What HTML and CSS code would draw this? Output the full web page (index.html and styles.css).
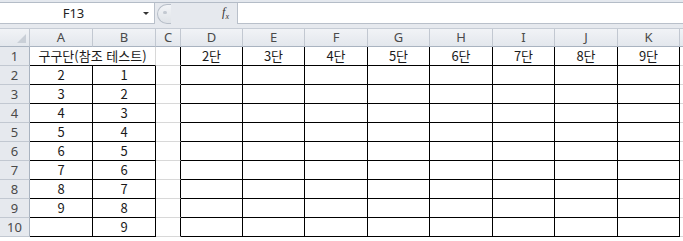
FILE: index.html
```html
<!DOCTYPE html>
<html lang="ko">
<head>
  <meta charset="UTF-8">
  <title>구구단 시트</title>
  <link rel="stylesheet" href="styles.css">
</head>
<body>
  <div class="ribbon-edge"></div>
  <div class="formula-bar">
    <div class="name-box">
      <span class="cell-name">F13</span>
      <span class="drop-arrow"></span>
    </div>
    <div class="fx-area">
      <span class="grip"></span>
      <span class="fx">f<sub>x</sub></span>
    </div>
    <div class="formula-input"></div>
  </div>

  <div class="sheet" id="sheet"></div>

  <script>
    const cols = ["A", "B", "C", "D", "E", "F", "G", "H", "I", "J", "K"];
    const sheet = document.getElementById("sheet");

    function addCell(text, classes) {
      const cell = document.createElement("div");
      cell.className = "cell " + classes;
      cell.textContent = text;
      sheet.appendChild(cell);
      return cell;
    }

    // column headers
    addCell("", "corner");
    cols.forEach(c => addCell(c, "col-head"));
    addCell("", "col-head rest");

    for (let r = 1; r <= 10; r++) {
      addCell(r, "row-head");

      if (r === 1) {
        addCell("구구단(참조 테스트)", "merged");
      } else {
        addCell(r <= 9 ? r : "", "boxed");
        addCell(r - 1, "boxed");
      }

      addCell("", "gap-col");

      for (let d = 2; d <= 9; d++) {
        addCell(r === 1 ? d + "단" : "", "boxed");
      }
      addCell("", "rest");
    }
  </script>
</body>
</html>
```

FILE: styles.css
```css
* {
  box-sizing: border-box;
}

body {
  margin: 0;
  width: 683px;
  height: 241px;
  overflow: hidden;
  background: #ffffff;
  font-family: "Noto Sans CJK KR", "Noto Sans", sans-serif;
  font-size: 13px;
  color: #1a1a1a;
}

.ribbon-edge {
  height: 3px;
  background: #e4e8ee;
  border-bottom: 1px solid #b4bcc7;
}

.formula-bar {
  display: flex;
  height: 26px;
  background: #e6e9ee;
  padding-bottom: 4px;
  border-bottom: 1px solid #c6ccd5;
}

.name-box {
  width: 155px;
  display: flex;
  align-items: center;
  background: #ffffff;
  border-right: 1px solid #b9c0ca;
  border-bottom: 1px solid #b9c0ca;
}

.cell-name {
  flex: 1;
  text-align: center;
  font-family: "Noto Sans", sans-serif;
  font-size: 13px;
  color: #222;
  padding-left: 4px;
}

.drop-arrow {
  width: 0;
  height: 0;
  margin-right: 5px;
  border-left: 3px solid transparent;
  border-right: 3px solid transparent;
  border-top: 3px solid #333;
}

.fx-area {
  width: 82px;
  display: flex;
  align-items: center;
  justify-content: space-between;
  padding: 0 8px 0 2px;
}

.grip {
  width: 14px;
  height: 20px;
  border: 1px solid #b7bec8;
  border-right: none;
  border-radius: 10px 0 0 10px;
  background: linear-gradient(#f2f4f7, #dfe3e8);
  position: relative;
}

.grip::after {
  content: "";
  position: absolute;
  left: 5px;
  top: 6px;
  width: 4px;
  height: 3px;
  border-radius: 2px;
  background: #c3c9d1;
}

.fx {
  font-family: "Liberation Serif", serif;
  font-style: italic;
  font-size: 12px;
  color: #333;
}

.fx sub {
  font-size: 8px;
}

.formula-input {
  flex: 1;
  background: #ffffff;
  border-left: 1px solid #b9c0ca;
  border-bottom: 1px solid #b9c0ca;
}

.sheet {
  display: grid;
  grid-template-columns: 30px 63px 63px 25px 62px 62px 63px 62px 63px 62px 63px 62px 1fr;
  grid-template-rows: 18px repeat(10, 19px);
}

.cell {
  border-right: 1px solid #d8d8d8;
  border-bottom: 1px solid #d8d8d8;
  text-align: center;
  line-height: 18px;
  white-space: nowrap;
  overflow: hidden;
}

.corner,
.col-head,
.row-head {
  background: linear-gradient(#f1f3f6, #e3e7ed);
  color: #4a4a4a;
  border-right-color: #c2c8d1;
  border-bottom-color: #a9b3c0;
}

.col-head {
  line-height: 17px;
  font-family: "Noto Sans", sans-serif;
}

.row-head {
  background: #e6e9ee;
  border-bottom-color: #c2c8d1;
  border-right-color: #a9b3c0;
  font-family: "Noto Sans", sans-serif;
}

.corner {
  position: relative;
}

.corner::after {
  content: "";
  position: absolute;
  right: 3px;
  bottom: 3px;
  border-left: 9px solid transparent;
  border-bottom: 9px solid #c9cfd7;
}

.merged {
  grid-column: span 2;
  border-bottom-color: #000;
}

.boxed {
  border-right-color: #000;
  border-bottom-color: #000;
}

.gap-col {
  border-right-color: #000;
}

.rest {
  border-right: none;
}
```
